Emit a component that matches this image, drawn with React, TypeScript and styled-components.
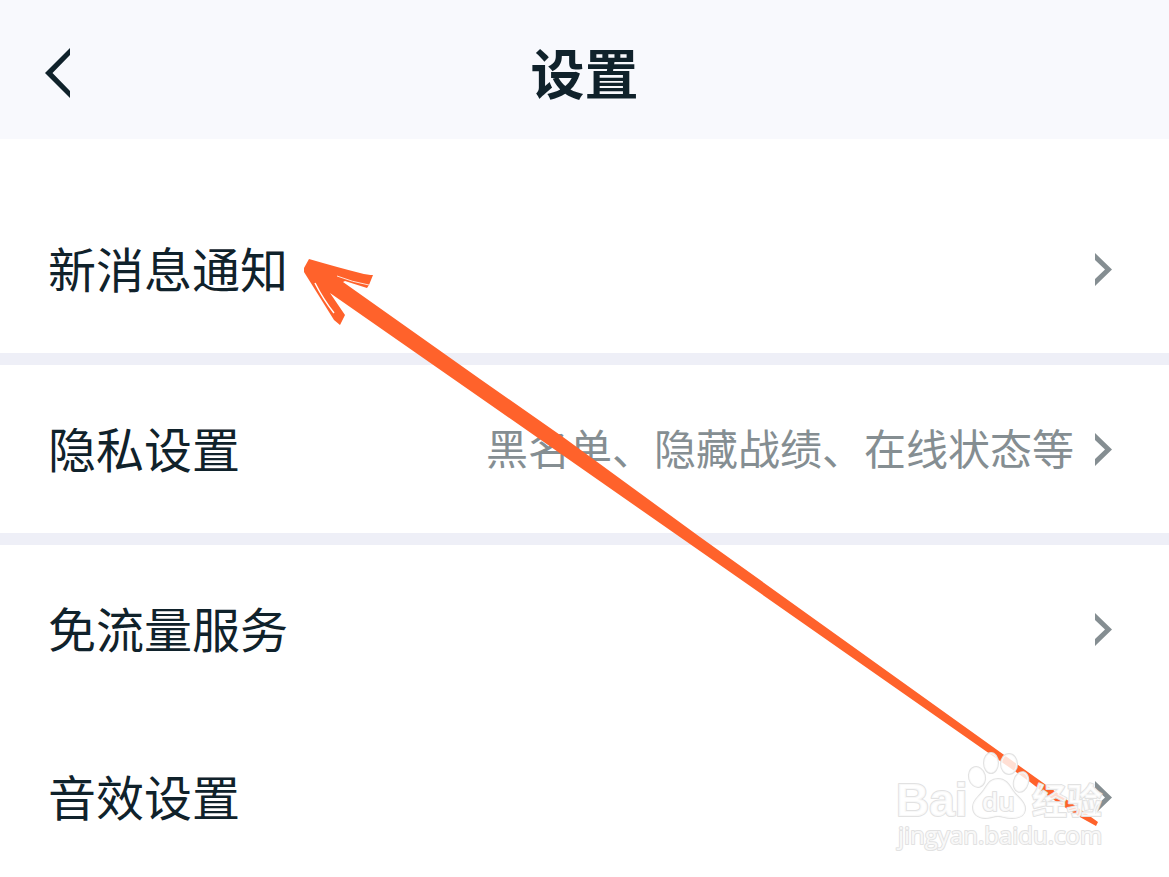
import React from "react";
import styled, { createGlobalStyle } from "styled-components";

const GlobalStyle = createGlobalStyle`
  *, *::before, *::after { box-sizing: border-box; }
  body {
    margin: 0;
    background: #ffffff;
    color: #10222b;
    font-family: "Noto Sans CJK SC", "Noto Sans", sans-serif;
  }
`;

const Page = styled.div`
  position: relative;
  height: 100vh;
  overflow: hidden;
`;

const Header = styled.header`
  display: grid;
  grid-template-columns: 1fr auto 1fr;
  align-items: center;
  height: 139px;
  padding: 7px 45px 0;
  background: #f8f9fd;
`;

const BackButton = styled.button`
  display: flex;
  justify-self: start;
  padding: 0;
  border: 0;
  background: none;
  color: inherit;
  cursor: pointer;
`;

const Title = styled.h1`
  margin: 0;
  padding-bottom: 2px;
  font-size: 54px;
  line-height: 80px;
  font-weight: 700;
`;

const List = styled.main`
  padding-top: 46px;
`;

const Group = styled.section`
  & + & {
    border-top: 12px solid #eeeff7;
  }
`;

const Row = styled.button`
  display: flex;
  align-items: center;
  width: 100%;
  height: 168px;
  padding: 0 57px 0 48px;
  border: 0;
  background: none;
  color: inherit;
  font: inherit;
  text-align: left;
  cursor: pointer;
`;

const Label = styled.span`
  flex: 1;
  padding-bottom: 4px;
  font-size: 48px;
  line-height: 72px;
`;

const Detail = styled.span`
  margin-right: 21px;
  padding-bottom: 4px;
  color: #858e92;
  font-size: 42px;
  line-height: 64px;
`;

const Chevron = styled.svg`
  flex: none;
  display: block;
  color: #858e92;
`;

const Annotation = styled.svg`
  position: absolute;
  top: 0;
  left: 0;
  width: 100%;
  pointer-events: none;
`;

const Watermark = styled.svg`
  position: absolute;
  right: 56px;
  bottom: 19px;
  pointer-events: none;
`;

type Item = { label: string; detail?: string };

const groups: Item[][] = [
  [{ label: "新消息通知" }],
  [{ label: "隐私设置", detail: "黑名单、隐藏战绩、在线状态等" }],
  [{ label: "免流量服务" }, { label: "音效设置" }],
];

function SettingRow({ label, detail }: Item) {
  return (
    <Row type="button">
      <Label>{label}</Label>
      {detail && <Detail>{detail}</Detail>}
      <Chevron width="17" height="33" viewBox="0 0 17 33" aria-hidden="true">
        <path d="M0 0L17 16.5L0 33V26L10 16.5L0 7Z" fill="currentColor" />
      </Chevron>
    </Row>
  );
}

function Arrow() {
  return (
    <Annotation viewBox="0 0 1169 877" aria-hidden="true">
      <path
        fill="#ff622b"
        d="M309 259Q340 268 360 273Q368 275 373 275L369 285L367 288L345 281L343 282L480 379L563 437L700 537L1000 752L1098 822L1096 826L1078 816L1048 796L1030 782L1016 772L990 754L720 565L495 408L330 293L345 315L340 325L334 320L304 272L304 268Z"
      />
      <path d="M315 283Q323 299 334 313" fill="none" stroke="#fff" strokeWidth="1.5" />
      <path d="M337 276Q352 282 369 285" fill="none" stroke="#ffe3d8" strokeWidth="1" />
    </Annotation>
  );
}

function BaiduMark() {
  const outline = {
    fill: "#fff",
    fillOpacity: 0.8,
    stroke: "#e2e2e2",
    strokeWidth: 2,
    strokeLinejoin: "round" as const,
    paintOrder: "stroke" as const,
  };
  return (
    <Watermark width="220" height="108" viewBox="893 750 220 108" role="img" aria-label="Baidu 经验">
      <g {...outline}>
        <text x="896" y="816" fontFamily='"Liberation Sans", Arial, sans-serif' fontWeight="700" fontSize="46">Bai</text>
        <ellipse cx="991" cy="763" rx="7" ry="10" />
        <ellipse cx="1009" cy="764" rx="8" ry="10" />
        <ellipse cx="977" cy="777" rx="8" ry="10" transform="rotate(-15 977 777)" />
        <ellipse cx="1021" cy="782" rx="7" ry="10" transform="rotate(15 1021 782)" />
        <path d="M998 779C1006 779 1009 785 1013 791C1017 797 1026 802 1025 810C1024 817 1018 818 1012 818C1004 818 1003 816 998 816C993 816 991 818 985 818C978 818 973 814 973 807C973 800 979 797 984 790C988 784 990 779 998 779Z" />
        <text x="982" y="811" fontFamily='"Open Sans", "Noto Sans", sans-serif' fontWeight="600" fontSize="26">du</text>
        <text x="1032" y="814" fontFamily='"Noto Sans CJK SC", sans-serif' fontWeight="700" fontSize="35">经验</text>
        <text x="898" y="844" fontFamily='"Open Sans", "Noto Sans", sans-serif' fontWeight="500" fontSize="24">jingyan.baidu.com</text>
      </g>
    </Watermark>
  );
}

export default function App() {
  return (
    <>
      <GlobalStyle />
      <Page>
        <Header>
          <BackButton type="button" aria-label="返回">
            <svg width="25" height="50" viewBox="0 0 25 50" aria-hidden="true">
              <path d="M0 25L25 0V7L7.5 25L25 43V50Z" fill="currentColor" />
            </svg>
          </BackButton>
          <Title>设置</Title>
        </Header>
        <List>
          {groups.map((items) => (
            <Group key={items[0].label}>
              {items.map((item) => (
                <SettingRow key={item.label} {...item} />
              ))}
            </Group>
          ))}
        </List>
        <Arrow />
        <BaiduMark />
      </Page>
    </>
  );
}
